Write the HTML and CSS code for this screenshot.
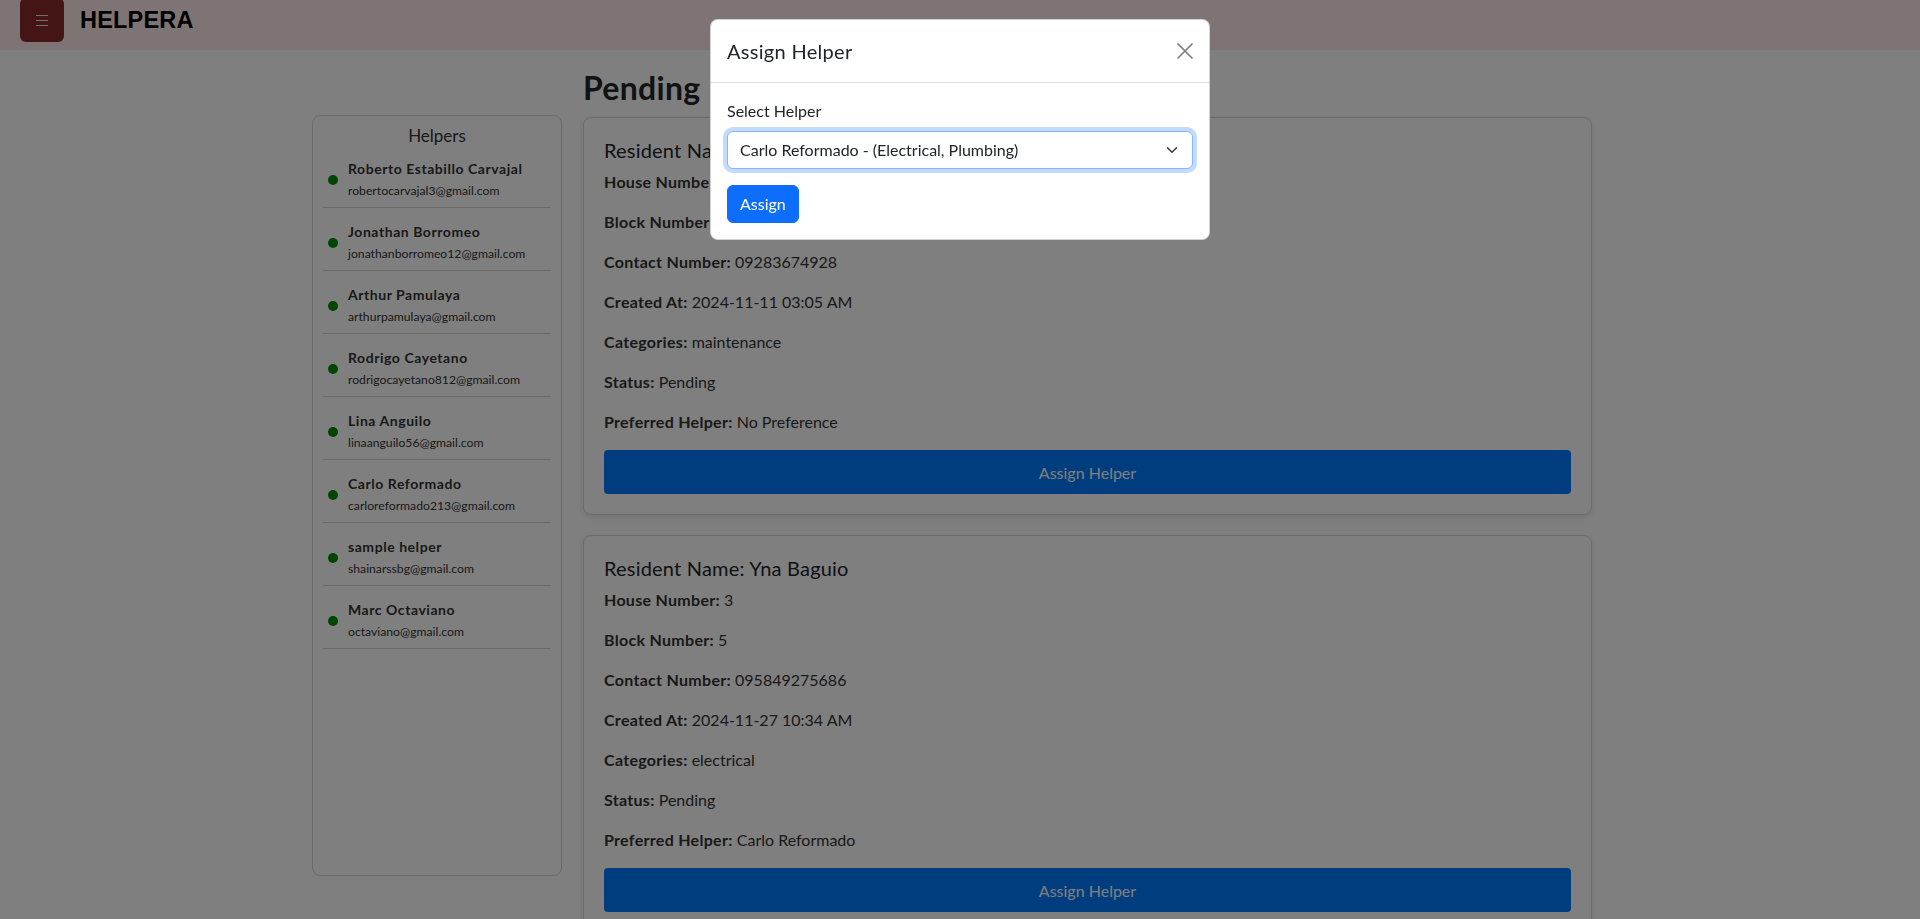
FILE: index.html
```html
<!DOCTYPE html>
<html lang="en">
<head>
<meta charset="utf-8">
<title>HELPERA - Pending</title>
<link rel="stylesheet" href="styles.css">
</head>
<body>
<header class="navbar">
  <button class="menu-btn" type="button" aria-label="Menu">
    <svg width="14" height="14" viewBox="0 0 14 14"><path d="M1 2.5h12M1 7.5h12M1 12.5h12" stroke="#e8e0e0" stroke-width="1" fill="none"/></svg>
  </button>
  <span class="brand">HELPERA</span>
</header>

<div class="layout">
  <aside class="helpers-panel">
    <h3 class="helpers-title">Helpers</h3>
    <ul class="helper-list">
      <li class="helper-item"><span class="dot"></span><div><div class="helper-name">Roberto Estabillo Carvajal</div><div class="helper-email">robertocarvajal3@gmail.com</div></div></li>
      <li class="helper-item"><span class="dot"></span><div><div class="helper-name">Jonathan Borromeo</div><div class="helper-email">jonathanborromeo12@gmail.com</div></div></li>
      <li class="helper-item"><span class="dot"></span><div><div class="helper-name">Arthur Pamulaya</div><div class="helper-email">arthurpamulaya@gmail.com</div></div></li>
      <li class="helper-item"><span class="dot"></span><div><div class="helper-name">Rodrigo Cayetano</div><div class="helper-email">rodrigocayetano812@gmail.com</div></div></li>
      <li class="helper-item"><span class="dot"></span><div><div class="helper-name">Lina Anguilo</div><div class="helper-email">linaanguilo56@gmail.com</div></div></li>
      <li class="helper-item"><span class="dot"></span><div><div class="helper-name">Carlo Reformado</div><div class="helper-email">carloreformado213@gmail.com</div></div></li>
      <li class="helper-item"><span class="dot"></span><div><div class="helper-name">sample helper</div><div class="helper-email">shainarssbg@gmail.com</div></div></li>
      <li class="helper-item"><span class="dot"></span><div><div class="helper-name">Marc Octaviano</div><div class="helper-email">octaviano@gmail.com</div></div></li>
    </ul>
  </aside>

  <main class="requests">
    <h2 class="page-title">Pending</h2>

    <section class="req-card">
      <h5 class="req-title">Resident Name: Maria Santos</h5>
      <p><strong>House Number:</strong> 12</p>
      <p><strong>Block Number:</strong> 2</p>
      <p><strong>Contact Number:</strong> 09283674928</p>
      <p><strong>Created At:</strong> 2024-11-11 03:05 AM</p>
      <p><strong>Categories:</strong> maintenance</p>
      <p><strong>Status:</strong> Pending</p>
      <p><strong>Preferred Helper:</strong> No Preference</p>
      <button class="assign-helper" type="button">Assign Helper</button>
    </section>

    <section class="req-card">
      <h5 class="req-title">Resident Name: Yna Baguio</h5>
      <p><strong>House Number:</strong> 3</p>
      <p><strong>Block Number:</strong> 5</p>
      <p><strong>Contact Number:</strong> 095849275686</p>
      <p><strong>Created At:</strong> 2024-11-27 10:34 AM</p>
      <p><strong>Categories:</strong> electrical</p>
      <p><strong>Status:</strong> Pending</p>
      <p><strong>Preferred Helper:</strong> Carlo Reformado</p>
      <button class="assign-helper" type="button">Assign Helper</button>
    </section>
  </main>
</div>

<div class="modal-backdrop"></div>
<div class="modal">
  <div class="modal-dialog">
    <div class="modal-header">
      <h5 class="modal-title">Assign Helper</h5>
      <button class="btn-close" type="button" aria-label="Close">
        <svg width="16" height="16" viewBox="0 0 16 16"><path d="M1 1L15 15M15 1L1 15" stroke="#000" stroke-width="1.7" stroke-linecap="round" fill="none"/></svg>
      </button>
    </div>
    <div class="modal-body">
      <label class="form-label" for="helper">Select Helper</label>
      <div class="select-wrap">
        <select id="helper" class="form-select">
          <option>Carlo Reformado - (Electrical, Plumbing)</option>
        </select>
        <svg class="chevron" width="16" height="12" viewBox="0 0 16 16"><path d="M2 5l6 6 6-6" stroke="#343a40" stroke-width="2" stroke-linecap="round" stroke-linejoin="round" fill="none"/></svg>
      </div>
      <button class="btn-primary" type="button">Assign</button>
    </div>
  </div>
</div>
</body>
</html>
```
FILE: styles.css
```css
* { box-sizing: border-box; }

html, body {
  margin: 0;
  padding: 0;
  height: 100%;
}

body {
  font-family: Lato, "Open Sans", sans-serif;
  color: #212529;
  background: #fff;
  overflow: hidden;
}

.navbar {
  height: 50px;
  background: #fde8e6;
  display: flex;
  align-items: center;
  padding: 0 0 10px 20px;
  gap: 16px;
}

.menu-btn {
  width: 44px;
  height: 44px;
  border: none;
  border-radius: 6px;
  background: #8a2b2d;
  display: flex;
  align-items: center;
  justify-content: center;
  padding: 0;
}

.brand {
  font-family: "Liberation Sans", Arial, sans-serif;
  font-weight: 700;
  font-size: 23.5px;
  color: #000;
  letter-spacing: 0.2px;
}

.layout {
  display: flex;
  align-items: flex-start;
  gap: 21px;
  padding-left: 312px;
}

.helpers-panel {
  width: 250px;
  min-height: 761px;
  margin-top: 65px;
  border: 1px solid #d6d6d6;
  border-radius: 8px;
  padding: 10px 10px;
  background: #fff;
}

.helpers-title {
  margin: 0;
  font-size: 17px;
  line-height: 19px;
  font-weight: 400;
  text-align: center;
  color: #333;
}

.helper-list {
  list-style: none;
  margin: 0;
  padding: 0;
}

.helper-item {
  display: flex;
  align-items: center;
  padding: 14px 0 7px;
  border-bottom: 1px solid #d4d4d4;
}

.dot {
  flex: none;
  width: 10px;
  height: 10px;
  border-radius: 50%;
  background: #008c00;
  margin: 0 10px 0 5px;
}

.helper-name {
  font-size: 14px;
  line-height: 20px;
  font-weight: 700;
  letter-spacing: 0.55px;
  color: #333;
}

.helper-email {
  font-size: 12.2px;
  line-height: 18px;
  margin-top: 3px;
  color: #333;
}

.requests {
  width: 1009px;
}

.page-title {
  margin: 19px 0 10px;
  font-size: 32px;
  line-height: 38px;
  font-weight: 700;
  letter-spacing: 0.3px;
  color: #212529;
}

.req-card {
  background: #fff;
  border: 1px solid #d8d8d8;
  border-radius: 8px;
  box-shadow: 0 2px 6px rgba(0, 0, 0, 0.1);
  padding: 20px;
  margin-bottom: 20px;
}

.req-title {
  margin: 0 0 8px;
  font-size: 20px;
  line-height: 24px;
  font-weight: 400;
  letter-spacing: 0.2px;
  color: #212529;
}

.req-card p {
  margin: 0 0 16px;
  font-size: 16px;
  line-height: 24px;
  color: #333;
}

.req-card p strong {
  font-weight: 700;
  letter-spacing: 0.3px;
}

.assign-helper {
  display: block;
  width: 100%;
  height: 44px;
  border: none;
  border-radius: 4px;
  background: #007bff;
  color: #fff;
  font-family: inherit;
  font-size: 16px;
}

/* Modal */
.modal-backdrop {
  position: fixed;
  inset: 0;
  background: rgba(0, 0, 0, 0.5);
  z-index: 10;
}

.modal {
  position: fixed;
  inset: 0;
  z-index: 20;
}

.modal-dialog {
  width: 500px;
  margin: 19px auto 0;
  background: #fff;
  border: 1px solid rgba(0, 0, 0, 0.175);
  border-radius: 8px;
}

.modal-header {
  display: flex;
  align-items: center;
  justify-content: space-between;
  padding: 16px;
  border-bottom: 1px solid #dee2e6;
}

.modal-title {
  margin: 0;
  font-size: 20px;
  line-height: 30px;
  font-weight: 400;
  letter-spacing: 0.3px;
  color: #212529;
}

.btn-close {
  width: 16px;
  height: 16px;
  padding: 0;
  border: none;
  background: transparent;
  opacity: 0.5;
  display: flex;
}

.modal-body {
  padding: 16px;
}

.form-label {
  display: block;
  margin-bottom: 8px;
  font-size: 16px;
  line-height: 24px;
  color: #212529;
}

.select-wrap {
  position: relative;
  margin-bottom: 16px;
}

.form-select {
  display: block;
  width: 100%;
  height: 38px;
  padding: 6px 36px 6px 12px;
  font-family: inherit;
  font-size: 16px;
  line-height: 24px;
  color: #212529;
  background: #fff;
  border: 1px solid #86b7fe;
  border-radius: 6px;
  box-shadow: 0 0 0 4px rgba(13, 110, 253, 0.25);
  appearance: none;
  -webkit-appearance: none;
  outline: none;
}

.chevron {
  position: absolute;
  right: 13px;
  top: 13px;
  pointer-events: none;
}

.btn-primary {
  display: inline-block;
  height: 38px;
  padding: 6px 12px;
  font-family: inherit;
  font-size: 16px;
  line-height: 24px;
  color: #fff;
  background: #0d6efd;
  border: 1px solid #0d6efd;
  border-radius: 6px;
}
```
